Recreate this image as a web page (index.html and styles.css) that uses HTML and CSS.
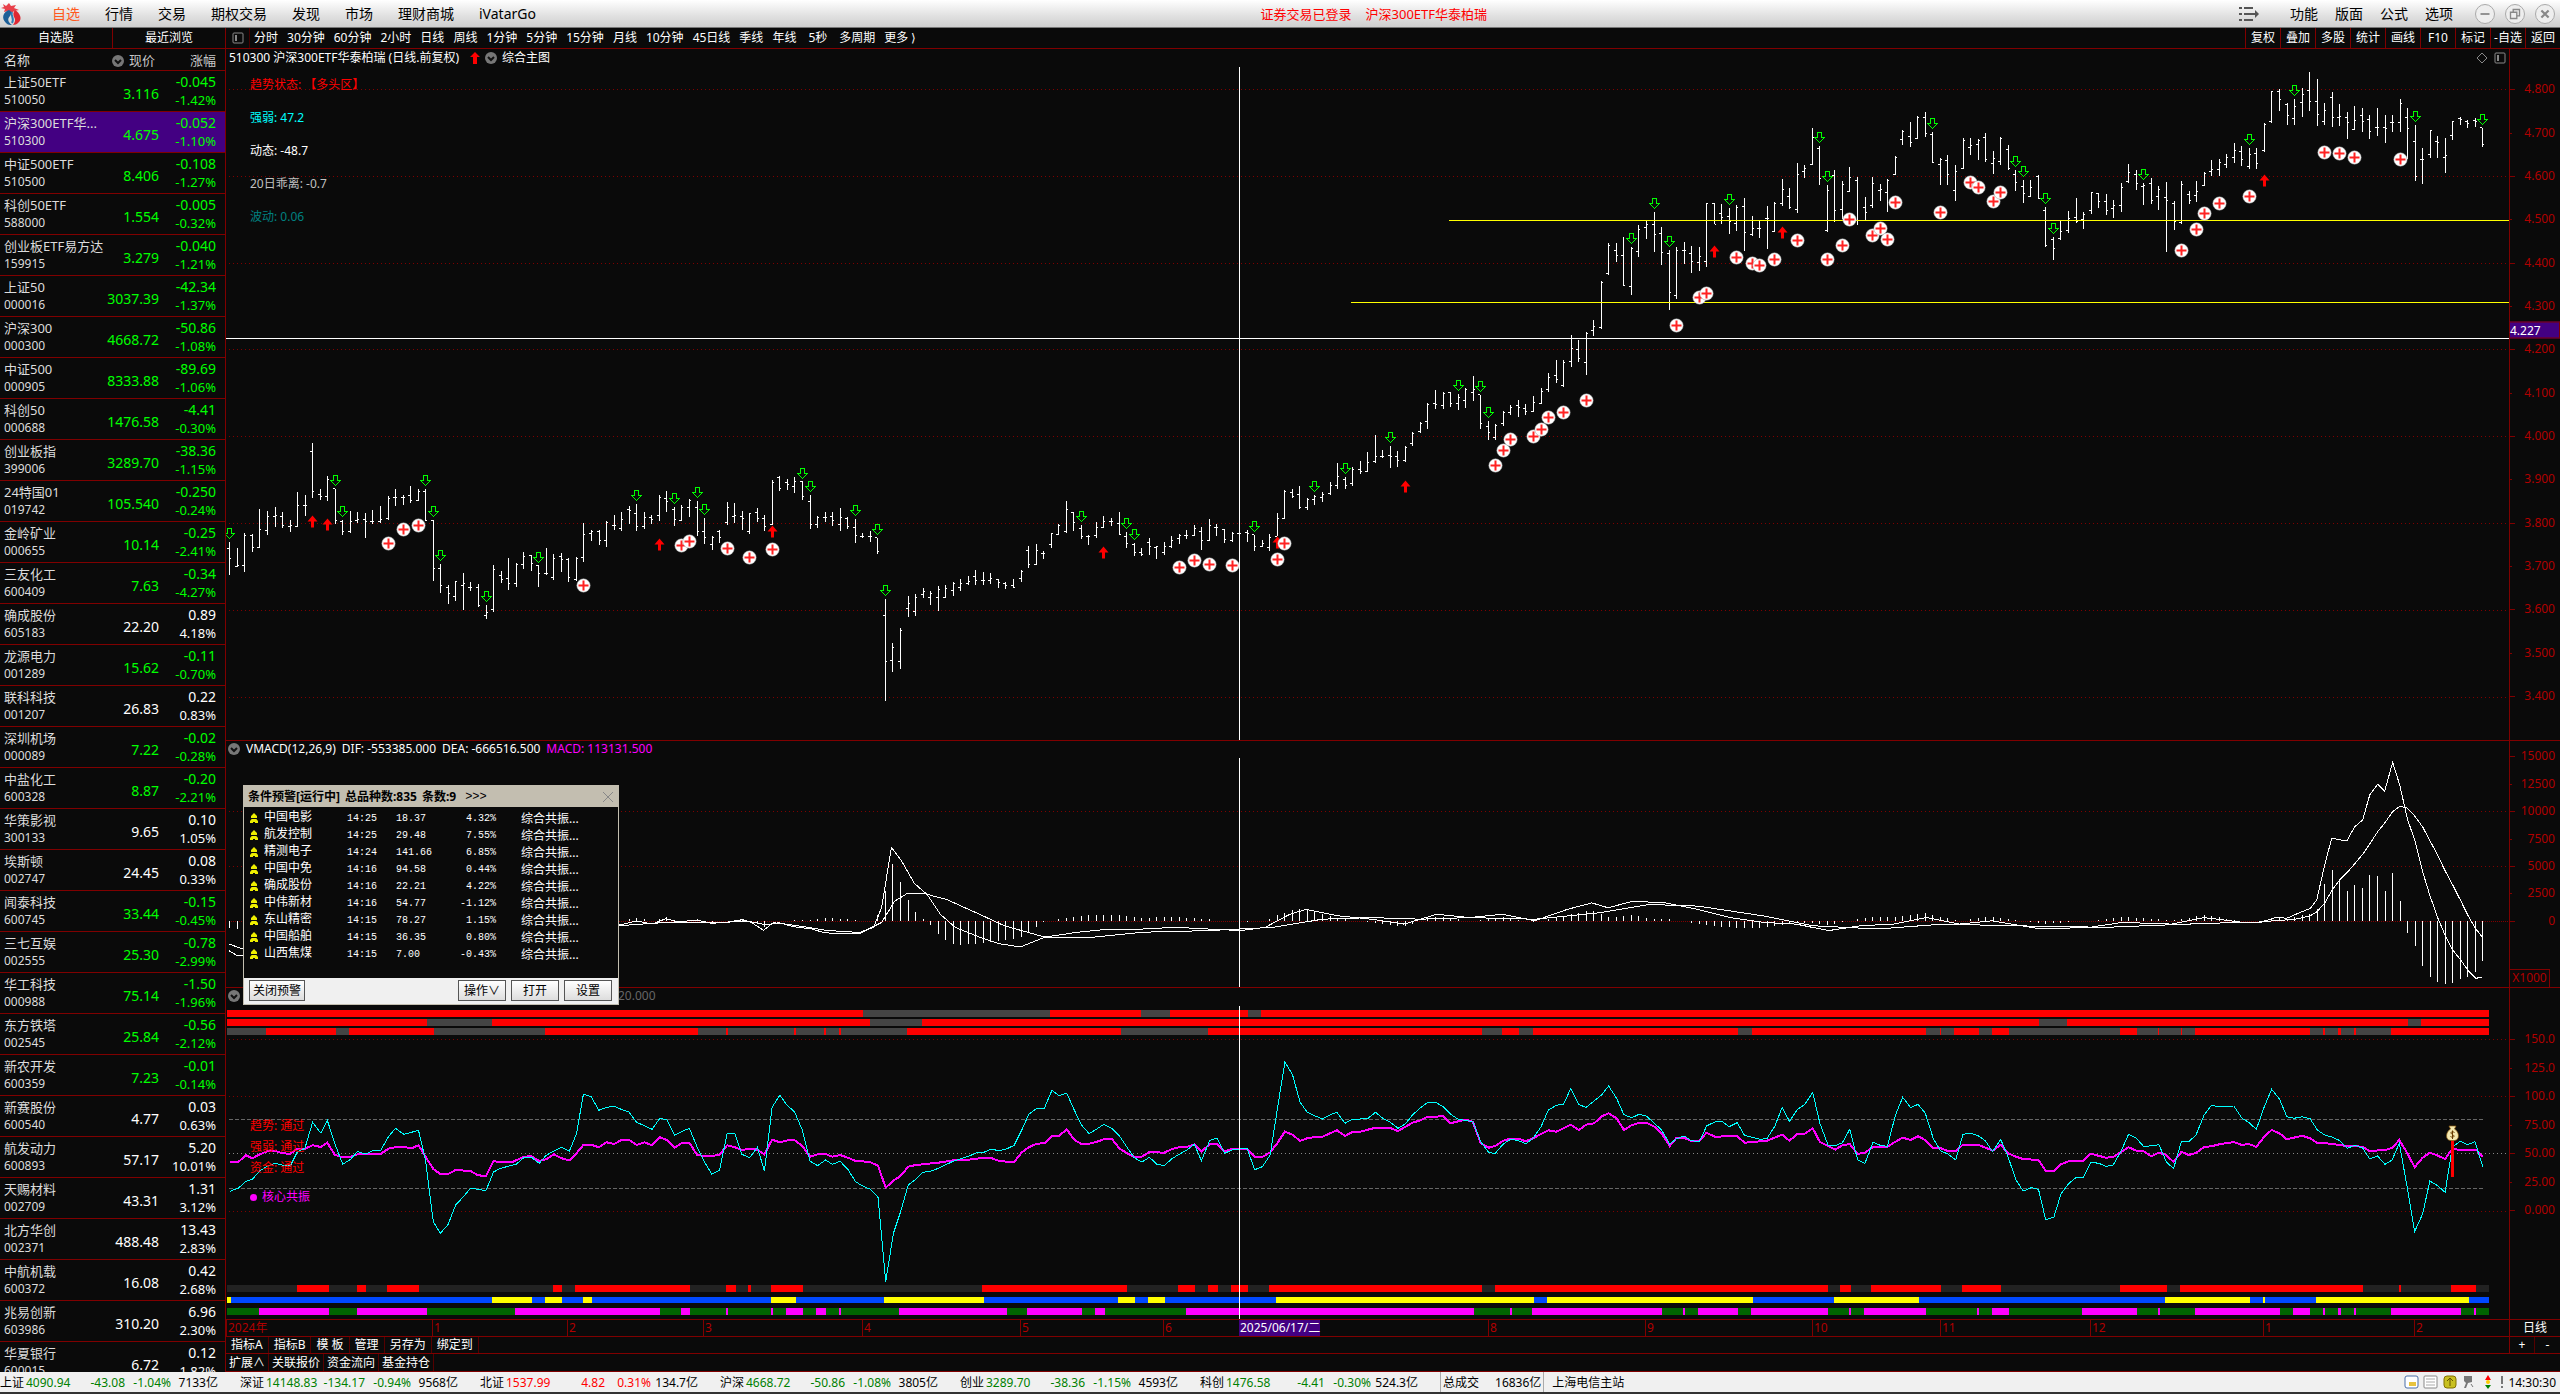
FILE: index.html
```html
<!DOCTYPE html>
<html lang="zh-CN">
<head>
<meta charset="utf-8">
<title>510300 沪深300ETF华泰柏瑞</title>
<link rel="stylesheet" href="styles.css">
</head>
<body>
<header class="topbar">
  <svg class="logo" viewBox="0 0 24 26"><path d="M3 3l3 2 3-3 2 3 5-1-2 3 5 2-5 1-2 2-4-2-4 1 1-3-4-1 3-1z" fill="#e8404a"/><path d="M9 9C3 11 1 17 6 22c2 2 4 2 6 2-4-3-5-6-2-9 2-3 1-5-1-6z" fill="#1c5f98"/><path d="M15 9c5 3 8 9 3 13-1 1-3 2-5 2 2-3 3-5 1-8-1-2-1-5 1-7z" fill="#e02832"/><path d="M12 11c-2 4 3 6 0 11" stroke="#2f7fb8" stroke-width="2" fill="none"/></svg>
  <nav class="menu"><a href="#" class="on">自选</a><a href="#">行情</a><a href="#">交易</a><a href="#">期权交易</a><a href="#">发现</a><a href="#">市场</a><a href="#">理财商城</a><a href="#">iVatarGo</a></nav>
  <div class="login"><span>证券交易已登录</span><span>沪深300ETF华泰柏瑞</span></div>
  <div class="tools">
    <svg class="listicon" viewBox="0 0 20 14"><path d="M0 1h3M5 1h9M0 7h3M5 7h11M0 13h3M5 13h9" stroke="#555" stroke-width="2"/><path d="M16 3l4 4-4 4z" fill="#555"/></svg>
    <nav class="menu2"><a href="#">功能</a><a href="#">版面</a><a href="#">公式</a><a href="#">选项</a></nav>
    <button class="win" aria-label="最小化"><svg viewBox="0 0 20 20"><path d="M5 10h10" stroke="#888" stroke-width="2"/></svg></button>
    <button class="win" aria-label="还原"><svg viewBox="0 0 20 20"><path d="M8 8V5h7v7h-3M5 8h7v7H5z" stroke="#888" stroke-width="1.5" fill="none"/></svg></button>
    <button class="win" aria-label="关闭"><svg viewBox="0 0 20 20"><path d="M6 6l8 8M14 6l-8 8" stroke="#888" stroke-width="2.4"/></svg></button>
  </div>
</header>
<main class="desk">
  <aside class="side">
    <div class="sidetabs"><button>自选股</button><button>最近浏览</button></div>
    <table class="quotes">
      <thead><tr><th class="n">名称</th><th class="p"><svg class="drop" viewBox="0 0 12 12"><circle cx="6" cy="6" r="6"/><path d="M3 5l3 3 3-3"/></svg> 现价</th><th class="c">涨幅</th></tr></thead>
      <tbody id="rows"></tbody>
    </table>
  </aside>
  <section class="work">
    <div class="toolbar">
      <span class="tgl"><svg class="pane" viewBox="0 0 12 12"><rect x="1" y="1" width="10" height="10" rx="1"/><path d="M3 3h2v6H3z"/></svg></span>
      <nav class="periods" id="periods"></nav>
      <nav class="acts" id="acts"></nav>
    </div>
    <div class="panel">
      <div class="plot">
        <svg class="canvas" id="main" viewBox="226 49 2283 692" preserveAspectRatio="none"></svg>
        <div class="title"><span>510300 沪深300ETF华泰柏瑞 (日线.前复权)</span><svg class="up" viewBox="0 0 10 12"><path d="M5 0l5 5H7v7H3V5H0z" fill="red"/></svg><svg class="drop" viewBox="0 0 12 12"><circle cx="6" cy="6" r="6"/><path d="M3 5l3 3 3-3"/></svg><span>综合主图</span></div>
        <div class="corner"><svg class="dia" viewBox="0 0 12 12"><path d="M6 1l5 5-5 5-5-5z"/></svg><svg class="pane" viewBox="0 0 12 12"><rect x="1" y="1" width="10" height="10" rx="1"/><path d="M3 3h2v6H3z"/></svg></div>
        <div class="notes"><span class="red">趋势状态: 【多头区】</span><span class="cyan">强弱: 47.2</span><span class="white">动态: -48.7</span><span class="silver">20日乖离: -0.7</span><span class="teal">波动: 0.06</span></div>
      </div>
      <div class="axis" id="axis1"></div>
    </div>
    <div class="panel">
      <div class="plot">
        <svg class="canvas" id="macd" viewBox="226 741 2283 247" preserveAspectRatio="none"></svg>
        <div class="title sub"><svg class="drop" viewBox="0 0 12 12"><circle cx="6" cy="6" r="6"/><path d="M3 5l3 3 3-3"/></svg><span>VMACD(12,26,9)</span><span>DIF: -553385.000</span><span>DEA: -666516.500</span><span class="mag">MACD: 113131.500</span></div>
      </div>
      <div class="axis" id="axis2"><span class="unit">X1000</span></div>
    </div>
    <div class="panel">
      <div class="plot">
        <svg class="canvas" id="sub" viewBox="226 988 2283 332" preserveAspectRatio="none"></svg>
        <div class="title sub"><svg class="drop" viewBox="0 0 12 12"><circle cx="6" cy="6" r="6"/><path d="M3 5l3 3 3-3"/></svg><span class="hiddenarg">20.000</span></div>
        <div class="flags"><span>趋势: 通过</span><span>强弱: 通过</span><span>资金: 通过</span><span class="mag core">核心共振</span></div>
      </div>
      <div class="axis" id="axis3"></div>
    </div>
    <div class="dates"><div class="months" id="months"></div><span class="daily">日线</span></div>
    <div class="tabs"><button>指标A</button><button>指标B</button><button>模 板</button><button>管理</button><button>另存为</button><button>绑定到</button><span class="zoom"><button>+</button><button>-</button></span></div>
    <div class="tabs last"><button>扩展∧</button><button>关联报价</button><button>资金流向</button><button>基金持仓</button></div>

    <section class="alert">
      <div class="alerthead"><b>条件预警[运行中]</b><b>总品种数:835</b><b>条数:9</b><span class="more">&gt;&gt;&gt;</span><button class="x" aria-label="关闭"><svg viewBox="0 0 12 12"><path d="M1 1l10 10M11 1L1 11" stroke="#888"/></svg></button></div>
      <div class="alertbody"><table id="alerts"></table></div>
      <div class="alertfoot"><button>关闭预警</button><span></span><button>操作∨</button><button>打开</button><button>设置</button></div>
    </section>
  </section>
</main>
<footer class="status">
  <div class="indices" id="indices"></div>
  <div class="total"><span>总成交</span><span>16836亿</span></div>
  <div class="host">上海电信主站</div>
  <div class="tray">
    <svg viewBox="0 0 16 16"><rect x="1" y="2" width="13" height="12" rx="2" fill="#fff" stroke="#4a6ea8"/><path d="M5 9h7M5 11h7" stroke="#e0b000" stroke-width="1.5"/></svg>
    <svg viewBox="0 0 16 16"><rect x="1" y="2" width="13" height="12" rx="1" fill="#fff" stroke="#888"/><path d="M3 5h9M3 8h9M3 11h9" stroke="#aaa"/></svg>
    <svg viewBox="0 0 16 16"><rect x="2" y="2" width="12" height="12" rx="3" fill="#c8c020" stroke="#807000"/><path d="M8 4v8M5 7l3-3 3 3" stroke="#665500" fill="none"/></svg>
    <svg viewBox="0 0 16 16"><path d="M3 2h8v6l-4 1-2 5H3l2-5-2-2z" fill="#777"/><path d="M10 10l2 3" stroke="#777"/></svg>
    <svg viewBox="0 0 16 16"><path d="M8 1l3 5H5z" fill="red"/><circle cx="8" cy="8" r="2" fill="#fc0"/><path d="M8 15l3-4H5z" fill="green"/></svg>
    <svg class="thin" viewBox="0 0 6 16"><path d="M3 2v8M3 12v2" stroke="#777" stroke-width="2"/></svg>
    <time>14:30:30</time>
  </div>
</footer>
<script src="app.js"></script>
</body>
</html>
```
FILE: styles.css
```css
* { box-sizing: border-box; }
body {
  margin: 0; height: 100vh; overflow: hidden;
  display: grid; grid-template-rows: 28px minmax(0, 1fr) 22px;
  background: #0a0a0a; color: #fff;
  font: 12px/16px "Noto Sans", "Noto Sans CJK SC", sans-serif;
}
a { color: inherit; text-decoration: none; }
button { font: inherit; color: inherit; background: none; border: 0; padding: 0; margin: 0; white-space: nowrap; }
svg { display: block; }
.red { color: #f00; } .cyan { color: #0ff; } .white { color: #fff; }
.silver { color: #c0c0c0; } .teal { color: #008080; } .mag { color: #f0f; }
.green { color: #0f0; }

.topbar {
  display: grid; grid-template-columns: 26px 1156fr auto 1000fr; align-items: center;
  background: linear-gradient(#fff, #e0e0e0 60%, #cfcfcf); border-bottom: 1px solid #777;
  color: #000; padding-right: 5px;
}
.logo { width: 24px; height: 26px; }
.menu { display: flex; gap: 25px; padding-left: 26px; font-size: 14px; line-height: 20px; white-space: nowrap; }
.menu .on { color: #ff5a1e; }
.login { display: flex; gap: 14px; color: #f00; font-size: 13px; white-space: nowrap; }
.tools { display: flex; justify-content: flex-end; align-items: center; gap: 10px; }
.listicon { width: 20px; height: 14px; margin-right: 21px; }
.menu2 { display: flex; gap: 17px; font-size: 14px; line-height: 20px; margin-right: 12px; }
.win { width: 20px; height: 20px; border-radius: 50%; border: 1px solid #aaa; background: #eee; }
.win svg { width: 18px; height: 18px; }

.desk { display: grid; grid-template-columns: 226px minmax(0, 1fr); min-height: 0; }
.side { border-right: 1px solid #800000; overflow: hidden; min-height: 0; }
.sidetabs { display: grid; grid-template-columns: 112px 1fr; height: 21px; border-bottom: 1px solid #800000; }
.sidetabs button + button { border-left: 1px solid #800000; }
.quotes { width: 100%; border-collapse: separate; border-spacing: 0; table-layout: fixed; }
.quotes th { height: 22px; padding: 0; font-size: 13px; font-weight: 400; line-height: 20px; color: #c8c8c8; border-bottom: 1px solid #800000; white-space: nowrap; }
.quotes td { height: 41px; padding: 0; border-bottom: 1px solid #800000; white-space: nowrap; font-size: 14px; line-height: 18px; vertical-align: middle; }
.quotes .n { width: 106px; padding-left: 4px; text-align: left; font-size: 13px; color: #dcdcdc; overflow: visible; }
.quotes .n span, .quotes .c span { display: block; }
.quotes .n .code { font-size: 12px; }
.quotes .p { width: 53px; text-align: right; }
.quotes th.p { padding-right: 4px; }
.quotes td.p { padding-top: 6px; }
.quotes .c { text-align: right; padding-right: 9px; }
.quotes .c .pct { font-size: 13px; }
.quotes .sel td { background: #430082; }
.drop { width: 12px; height: 12px; display: inline-block; vertical-align: -2px; fill: #777; flex: none; }
.drop path { fill: none; stroke: #111; stroke-width: 2; }
th .drop { margin-right: 2px; }
.pane { width: 12px; height: 12px; fill: none; stroke: #888; }
.pane path { fill: #888; stroke: none; }
.dia { width: 12px; height: 12px; fill: none; stroke: #888; }

.work {
  position: relative; display: grid; min-height: 0;
  grid-template-rows: 21px minmax(0, 692fr) minmax(0, 247fr) minmax(0, 332fr) 17px 17px 18px;
}
.toolbar { display: flex; border-bottom: 1px solid #800000; line-height: 20px; }
.tgl { width: 24px; display: grid; place-items: center; border-right: 1px solid #400; }
.periods { display: flex; gap: 9px; padding-left: 4px; flex: 1; white-space: nowrap; }
.periods .wide { padding: 0 3px; }
.acts { display: flex; }
.acts a { width: 35px; text-align: center; border-left: 1px solid #800000; white-space: nowrap; }
.panel { display: grid; grid-template-columns: minmax(0, 1fr) 51px; min-height: 0; }
.plot { position: relative; min-height: 0; }
.canvas { position: absolute; inset: 0; width: 100%; height: 100%; }
.title { position: absolute; left: 3px; top: 1px; display: flex; align-items: center; gap: 5px; white-space: nowrap; }
.title.sub { left: 2px; top: 0; gap: 6px; }
.title .up { width: 10px; height: 12px; margin-left: 6px; }
.corner { position: absolute; right: 3px; top: 3px; display: flex; gap: 6px; }
.notes { position: absolute; left: 24px; top: 28px; display: grid; gap: 17px; }
.flags { position: absolute; left: 24px; top: 130px; display: grid; gap: 5px; color: #f00; }
.flags .core { margin-top: 8px; display: flex; align-items: center; gap: 5px; }
.flags .core::before { content: ""; width: 7px; height: 7px; border-radius: 50%; background: #f0f; }
.hiddenarg { color: #666; margin-left: 372px; }
.axis { position: relative; border-left: 1px solid #800000; border-bottom: 1px solid #800000; color: #b00000; }
.axis span { position: absolute; right: 5px; transform: translateY(-50%); white-space: nowrap; }
.axis i { position: absolute; left: 0; height: 1px; background: #800000; }
.axis .cur { left: -1px; right: 0; height: 17px; line-height: 15px; background: #430082; color: #fff; border: 1px solid #800000; }
.axis .unit { right: 10px; bottom: 0; left: 0; height: 18px; border: 1px solid #800000; border-width: 1px 1px 0 0; transform: none; text-align: center; }
.dates { display: grid; grid-template-columns: minmax(0, 1fr) 51px; border-bottom: 1px solid #800000; }
.months { position: relative; color: #b00000; }
.months span { position: absolute; top: 0; height: 16px; line-height: 16px; padding-left: 1px; border-left: 1px solid #800000; white-space: nowrap; }
.months .now { background: #430082; color: #fff; border: 0; }
.daily { border-left: 1px solid #800000; text-align: center; line-height: 16px; }
.tabs { display: flex; border-bottom: 1px solid #800000; line-height: 16px; }
.tabs button { padding: 0 5px; border-right: 1px solid #500; }
.tabs.last button { padding: 0 3px; }
.tabs .zoom { margin-left: auto; width: 51px; display: grid; grid-template-columns: 1fr 1fr; border-left: 1px solid #800000; }
.tabs .zoom button:last-child { border: 0; }

.alert { position: absolute; left: 17px; top: 757px; width: 376px; border: 1px solid #c3beb0; background: #0a0a0a; color: #fff; }
.alerthead { display: flex; align-items: center; gap: 5px; height: 21px; padding: 0 4px; background: #c3beb0; color: #000; }
.alerthead .more { font: 12px "Liberation Mono", monospace; margin-left: 4px; }
.x { margin-left: auto; width: 12px; height: 12px; }
.alertbody { height: 171px; padding-top: 3px; }
.alertbody table { border-collapse: collapse; table-layout: fixed; width: 360px; }
.alertbody td { height: 17px; padding: 0; line-height: 15px; white-space: nowrap; font-family: "Liberation Mono", "Noto Sans CJK SC", monospace; font-size: 10px; }
.alertbody .nm { font-size: 12px; }
.alertbody .r { text-align: right; }
.alertbody .sig { padding-left: 25px; font-size: 12px; font-family: "Noto Sans", "Noto Sans CJK SC", sans-serif; }
.alertbody svg { width: 8px; height: 10px; margin: 0 0 2px 6px; }
.alertfoot { display: flex; gap: 5px; height: 26px; padding: 2px 6px 2px 5px; background: #f0f0f0; color: #000; }
.alertfoot span { flex: 1; }
.alertfoot button { width: 48px; height: 21px; border: 1px solid #555; background: linear-gradient(#fff, #ddd); }
.alertfoot button:first-child { width: 56px; }

.status { display: flex; background: #f0f0f0; color: #000; border-bottom: 2px solid #333; line-height: 21px; white-space: nowrap; overflow: hidden; }
.indices { display: flex; }
.idx { display: grid; grid-template-columns: 26px 45px 54px 46px 47px 22px; text-align: right; }
.idx span:first-child, .idx .v { text-align: left; }
.idx .dn { color: #008000; } .idx .rs { color: #f00; }
.total { display: flex; gap: 16px; padding: 0 2px; border-left: 1px solid #aaa; border-right: 1px solid #aaa; }
.host { padding-left: 8px; flex: 1; }
.tray { display: flex; gap: 3px; align-items: center; padding-right: 4px; }
.tray svg { width: 16px; height: 16px; }
.tray .thin { width: 6px; }
```
FILE: app.js
```js
const $ = id => document.getElementById(id);
const NS = 'http://www.w3.org/2000/svg';
function add(svg, tag, attrs) {
  const e = document.createElementNS(NS, tag);
  for (const k in attrs) e.setAttribute(k, attrs[k]);
  svg.appendChild(e);
  return e;
}
const nums = s => s.trim().split(/[\s,]+/).map(Number);

// ---- watch list ----
const quotes = `上证50ETF 510050 3.116 -0.045 -1.42%
沪深300ETF华... 510300 4.675 -0.052 -1.10%
中证500ETF 510500 8.406 -0.108 -1.27%
科创50ETF 588000 1.554 -0.005 -0.32%
创业板ETF易方达 159915 3.279 -0.040 -1.21%
上证50 000016 3037.39 -42.34 -1.37%
沪深300 000300 4668.72 -50.86 -1.08%
中证500 000905 8333.88 -89.69 -1.06%
科创50 000688 1476.58 -4.41 -0.30%
创业板指 399006 3289.70 -38.36 -1.15%
24特国01 019742 105.540 -0.250 -0.24%
金岭矿业 000655 10.14 -0.25 -2.41%
三友化工 600409 7.63 -0.34 -4.27%
确成股份 605183 22.20 0.89 4.18%
龙源电力 001289 15.62 -0.11 -0.70%
联科科技 001207 26.83 0.22 0.83%
深圳机场 000089 7.22 -0.02 -0.28%
中盐化工 600328 8.87 -0.20 -2.21%
华策影视 300133 9.65 0.10 1.05%
埃斯顿 002747 24.45 0.08 0.33%
闻泰科技 600745 33.44 -0.15 -0.45%
三七互娱 002555 25.30 -0.78 -2.99%
华工科技 000988 75.14 -1.50 -1.96%
东方铁塔 002545 25.84 -0.56 -2.12%
新农开发 600359 7.23 -0.01 -0.14%
新赛股份 600540 4.77 0.03 0.63%
航发动力 600893 57.17 5.20 10.01%
天赐材料 002709 43.31 1.31 3.12%
北方华创 002371 488.48 13.43 2.83%
中航机载 600372 16.08 0.42 2.68%
兆易创新 603986 310.20 6.96 2.30%
华夏银行 600015 6.72 0.12 1.82%`;
$('rows').innerHTML = quotes.split('\n').map(l => {
  const [n, code, p, c, pct] = l.split(' ');
  const k = c[0] === '-' ? 'green' : 'white';
  return `<tr class="${code === '510300' ? 'sel' : ''}"><td class="n"><span>${n}</span><span class="code">${code}</span></td><td class="p ${k}">${p}</td><td class="c ${k}"><span>${c}</span><span class="pct">${pct}</span></td></tr>`;
}).join('');

$('periods').innerHTML = '分时 30分钟 60分钟 2小时 日线 周线 1分钟 5分钟 15分钟 月线 10分钟 45日线 季线 年线 5秒 多周期 更多&nbsp;&#10217;'
  .split(' ').map(t => `<a href="#"${t === '5秒' ? ' class="wide"' : ''}>${t}</a>`).join('');
$('acts').innerHTML = '复权 叠加 多股 统计 画线 F10 标记 -自选 返回'.split(' ').map(t => `<a href="#">${t}</a>`).join('');

// ---- alert window ----
$('alerts').innerHTML = '<colgroup><col style="width:20px"><col style="width:83px"><col style="width:49px"><col style="width:40px"><col style="width:60px"><col></colgroup>' +
`中国电影 14:25 18.37 4.32%
航发控制 14:25 29.48 7.55%
精测电子 14:24 141.66 6.85%
中国中免 14:16 94.58 0.44%
确成股份 14:16 22.21 4.22%
中伟新材 14:16 54.77 -1.12%
东山精密 14:15 78.27 1.15%
中国船舶 14:15 36.35 0.80%
山西焦煤 14:15 7.00 -0.43%`.split('\n').map(l => {
  const [n, t, p, c] = l.split(' ');
  return `<tr><td><svg viewBox="0 0 8 10"><path d="M4 0l3 3v2H5.500l2.500 3v2H0V8l2.500-3H1V3z" fill="#ee0"/><path d="M1 5.500h6M3 9.500h2" stroke="#0a0a0a"/></svg></td><td class="nm">${n}</td><td>${t}</td><td>${p}</td><td class="r">${c}</td><td class="sig">综合共振...</td></tr>`;
}).join('');

// ---- status bar ----
$('indices').innerHTML = `上证 4090.94 -43.08 -1.04% 7133亿
深证 14148.83 -134.17 -0.94% 9568亿
北证 1537.99 4.82 0.31% 134.7亿
沪深 4668.72 -50.86 -1.08% 3805亿
创业 3289.70 -38.36 -1.15% 4593亿
科创 1476.58 -4.41 -0.30% 524.3亿`.split('\n').map(l => {
  const [n, v, c, p, a] = l.split(' ');
  const k = c[0] === '-' ? 'dn' : 'rs';
  return `<div class="idx"><span>${n}</span><span class="v ${k}">${v}</span><span class="${k}">${c}</span><span class="${k}">${p}</span><span>${a}</span><span></span></div>`;
}).join('');

// ---- axes ----
function axis(id, top, height, list) {
  let h = '';
  list.forEach(([t, y], i) => {
    const p = ((y - top) / height * 100).toFixed(3);
    h += `<span style="top:${p}%">${t}</span><i style="top:${p}%;width:${i % 2 ? 2 : 5}px"></i>`;
  });
  $(id).insertAdjacentHTML('beforeend', h);
}
axis('axis1', 49, 692, Array.from({ length: 15 }, (_, i) => [(4.8 - i / 10).toFixed(3), 89.5 + i * 43.4]));
$('axis1').insertAdjacentHTML('beforeend', `<span class="cur" style="top:${(330.5 - 49) / 6.92}%">4.227</span>`);
axis('axis2', 741, 247, [15000, 12500, 10000, 7500, 5000, 2500, 0].map((v, i) => [v, 756.5 + i * 27.5]));
axis('axis3', 988, 332, ['150.0', '125.0', '100.0', '75.00', '50.00', '25.00', '0.000'].map((v, i) => [v, 1039.5 + i * 28.6]));
$('months').innerHTML = [['2024年', 226], [1, 432], [2, 567], [3, 703], [4, 862], [5, 1020], [6, 1163], [8, 1488], [9, 1645], [10, 1812], [11, 1940], [12, 2090], [1, 2263], [2, 2414]]
  .map(([t, x]) => `<span style="left:${((x - 226) / 22.83).toFixed(3)}%">${t}</span>`).join('') +
  `<span class="now" style="left:${(1239 - 226) / 22.83}%">2025/06/17/二</span>`;

function hline(svg, y, x1, x2, color, dash) {
  add(svg, 'path', { d: `M${x1} ${y}H${x2}`, stroke: color, 'stroke-dasharray': dash || 'none', 'shape-rendering': 'crispEdges' });
}
function vline(svg, y1, y2) {
  add(svg, 'path', { d: `M1239.5 ${y1}V${y2}`, stroke: '#fff', 'shape-rendering': 'crispEdges' });
}

// ---- price bars: high, low, open, close offsets in thirds of a unit below each base ----
const X = i => Math.round(229.3 + 7.5357 * i);
const series = [
[420, `366 465 385 415 385 441 438 436 339 456 436 345 342 396 345 382 267 384 380 326 273 345 330 287 261 321 287 285 276 324 288 315 300 336 318 316 216 321 317 254
225 288 256 256 69 234 94 213 207 240 223 228 168 243 228 178 207 312 205 300 300 345 303 332 273 339 332 302 276 308 300 296 280 354 296 303 270 312 303 303
258 309 303 298 228 300 295 235 207 258 232 232 225 255 232 230 198 249 226 240 207 243 240 214 207 303 214 300 300 483 300 444 432 519 444 496 495 552 502 518
483 543 529 484 459 571 496 490 486 513 502 502 492 561 502 556 555 597 586 577 435 576 568 447 453 488 464 476 414 510 475 490 429 501 490 431 396 447 433 408
405 453 406 430 435 501 435 460 384 465 460 460 402 480 471 415 399 456 408 418 414 486 418 472 411 483 478 415 309 426 411 341 330 363 340 332 330 375 333 360
303 381 361 306 285 330 314 314 276 333 325 297 258 312 268 270 252 333 280 318 276 327 318 290 285 312 290 297 225 303 284 230 213 276 235 244 261 318 268 296
255 303 300 262 237 291 261 240 243 348 262 333 294 372 333 352 348 390 372 352 330 369 333 350 246 315 306 262 249 309 288 285 273 330 289 294 279 342 334 280
264 306 276 294 285 333 294 318 180 315 312 186 168 213 172 205 177 210 185 193 171 219 199 183 183 240 184 228 225 327 243 312 288 324 312 291 276 306 290 290
276 318 289 300 264 333 313 292 291 327 293 318 297 369 322 345 339 354 349 349 333 366 349 349 354 402 351 394 537 843 586 723 669 756 721 680 624 747 723 631
528 591 565 550 522 588 573 532 504 534 523 512 513 556 532 520 498 573 532 508 495 534 532 505 486 528 511 490 477 513 502 490 468 495 490 484 450 495 468 481
456 495 481 481 459 492 481 474 477 504 478 487 486 507 490 495 477 503 496 501 450 486 475 454 378 444 390 433 372 435 433 390 393 417 398 398 339 384 373 340
312 345 341 314 243 339 334 268 276 333 277 306 315 357 324 348 345 375 348 348 306 354 346 322 288 324 322 303 294 318 303 303 276 345 310 343 336 384 349 370
369 408 373 396 384 408 395 403 354 405 367 378 378 417 380 379 366 405 397 378 348 384 379 360 342 372 354 345 330 357 346 345 315 348 345 325 321 390 333 361
297 363 361 316 312 348 322 320 327 369 327 357 336 366 360 338 338 362 338 338`],
[180, `1050 1086 1057 1060 1065 1113 1062 1097 1080 1102 1099 1090 1062 1113 1102 1072 999 1068 1067 1015 930 1017 1013 932 927 954 936 948 918 987 943 980 954 990 982 956 945 975 958 947
936 966 952 942 906 945 940 915 849 927 916 889 891 927 898 914 861 918 910 868 843 882 868 874 816 876 874 847 765 849 844 829 810 834 829 829 798 864 826 829
813 861 829 841 798 846 841 800 756 798 790 760 726 759 754 728 669 747 724 671 630 687 668 672 636 687 676 638 637 681 637 668 642 690 668 652 624 684 661 626
588 663 637 628 645 747 643 730 723 780 739 757 732 780 772 734 693 738 730 696 675 705 697 680 660 711 676 681 672 705 684 694 648 696 694 667 624 672 670 634
579 636 628 590 540 609 586 598 540 621 616 547 465 561 544 505 480 546 508 535 456 585 547 458 420 468 451 439 303 447 442 307 189 285 280 195 189 246 211 226
171 318 226 314 201 345 319 204 135 231 214 148 123 177 142 132 96 216 133 163 141 255 160 217 210 390 220 337 201 357 346 210 186 252 211 209 198 279 220 244
201 273 247 229 69 261 244 70 69 132 70 131 72 132 100 112 84 162 109 124 75 153 130 81 54 213 79 157 108 168 163 145 123 174 145 145`],
[60, `438 567 475 475 426 516 514 428 357 438 428 386 384 447 409 442 309 459 448 343 315 354 334 325 204 315 311 230 258 375 265 355 375 516 511 391 330 486 345 451
363 477 448 373 321 396 394 352 351 495 361 481 411 480 442 457 351 444 436 370 372 423 391 388 357 456 397 361 289 345 343 290 210 255 238 214 186 261 229 247
168 237 235 170 156 231 172 220 216 309 223 307 294 375 313 298 285 375 300 343 315 423 391 334 234 327 325 241 234 285 262 256 237 300 253 241 219 306 232 298
273 342 310 295 231 315 304 233 255 330 268 325 330 393 341 367 360 429 379 400 360 411 409 382 345 417 348 413 441 561 451 556 531 600 538 565 480 540 535 514
453 519 511 475 414 489 472 484 456 507 478 463 396 462 451 397 399 444 398 424 402 465 424 451 420 474 444 436 369 456 436 382 312 369 364 337 330 390 343 370
369 435 379 376 354 432 370 421 378 450 409 388 366 576 412 421 423 510 430 484 363 492 486 373 393 432 401 421 363 426 406 394 336 378 376 340 300 348 334 328
297 348 328 305
282 324 313 292 249 309 292 270 258 318 274 298 264 327 319 283 264 327 280 310 189 276 271 193 93 189 184 94 87 153 94 118 129 195 133 166 117 195 175 139
84 171 127 103 36 153 91 124 57 198 124 163 129 195 184 151 96 201 112 172 132 198 172 169 156 237 172 187 138 210 208 181 144 216 166 184 165 237 178 214
144 228 202 202 165 249 202 205 165 216 187 187 117 216 187 130 144 297 172 205 195 363 244 349 264 372 298 298 210 294 283 211 228 294 244 247 234 339 292 286
183 240 226 184 171 195 175 176 180 204 184 190 174 201 181 184 204 261 202 253`]];
const main = $('main');
for (let i = 0; i < 8; i++) hline(main, 89.5 + Math.round(i * 86.8), 229, 2509, '#800000', '1 3');
let d = '', n = 0;
series.forEach(([base, s]) => {
  const a = nums(s);
  for (let k = 0; k + 3 < a.length; k += 4, n++) {
    const [h, l, o, c] = a.slice(k, k + 4).map(v => Math.round(base + v / 3));
    const x = X(n);
    d += `M${x + .5} ${h}V${l}M${x - 2} ${o + .5}h2M${x + 1} ${c + .5}h1`;
  }
});
add(main, 'path', { d, stroke: '#fff', fill: 'none', 'shape-rendering': 'crispEdges' });
hline(main, 220.5, 1449, 2509, '#ff0');
hline(main, 302.5, 1351, 2509, '#ff0');

const marks = {
  dn: [[420, '0 340 14 181 15 274 26 181 27 274 28 406 34 529 41 412 54 226 59 235 62 217 63 268 76 160 77 199 83 271 86 328 87 511 113 289 119 310 120 343 136 319'],
    [180, '144 919 148 865 154 772 163 616 166 619 167 697 186 175 189 70 191 184 199 58'],
    [60, '211 232 212 349 226 190 237 304 238 334 241 415 242 505 254 343 268 238 274 91 290 169 299 178']],
  up: [[420, '11 302 13 312 57 371 72 334 116 395'], [180, '139 1087 156 917 197 212'], [60, '206 515 270 359']],
  plus: [[420, '21 369 23 327 25 315 47 495 60 375 61 363 66 384 69 411 72 387 126 441 128 420 130 432 133 435'],
    [180, '140 1089 139 1138 168 855 169 810 170 777 173 768 174 747 175 711 177 696 180 660 192 435 195 351 196 339 200 231 202 249 203 255'],
    [60, '205 597 208 540 212 597 214 555 215 477 218 525 219 504 220 537 221 426 227 456 231 366 232 381 234 423 235 396 259 570 261 507 262 459 264 429 268 408 278 276 280 279 282 291 288 297']]
};
for (const kind in marks) marks[kind].forEach(([base, s]) => {
  const a = nums(s);
  for (let k = 0; k < a.length; k += 2) {
    const x = X(a[k]) + .5, y = Math.round(base + a[k + 1] / 3) + .5;
    if (kind === 'dn') add(main, 'path', { d: `M${x - 2} ${y - 5}h4v5h3L${x} ${y + 5}l-5-5h3z`, stroke: '#0f0', fill: 'none', 'shape-rendering': 'crispEdges' });
    if (kind === 'up') add(main, 'path', { d: `M${x} ${y - 6}l5 6h-3.500v6h-3v-6h-3.500z`, fill: 'red' });
    if (kind === 'plus') {
      add(main, 'circle', { cx: x, cy: y, r: 6.7, fill: '#fff', stroke: '#999', 'stroke-width': .5 });
      add(main, 'path', { d: `M${x - 5} ${y}h10M${x} ${y - 5}v10`, stroke: '#f22', 'stroke-width': 2 });
    }
  }
});
hline(main, 338.5, 226, 2509, '#fff');
vline(main, 67, 740);
hline(main, 740.5, 226, 2509, '#800000');

// ---- volume MACD ----
const macd = $('macd');
[811.5, 866.5].forEach(y => hline(macd, y, 229, 2509, '#800000', '1 3'));
hline(macd, 921.5, 229, 2509, '#800000', '1 1');
const map = (s, ox, kx, oy, ky) => {
  const a = nums(s), r = [];
  for (let k = 0; k < a.length; k += 2) r.push((ox + a[k] / kx).toFixed(1) + ',' + (oy + a[k + 1] / ky).toFixed(1));
  return r;
};
const line = (svg, pts, color, w) => add(svg, 'polyline', { points: pts.join(' '), fill: 'none', stroke: color, 'stroke-width': w, 'shape-rendering': 'crispEdges' });
const dif = [
  ...map('22 632 40 645 56 647 500 620 978 555 1000 549 1020 543 1060 552 1092 536 1120 545 1170 541 1205 550 1240 547 1280 539 1300 546 1332 571 1355 548 1390 553 1430 560 1480 570 1530 575 1568 577', 220, 2.45, 740, 3),
  ...map('535 568 540 556 546 519 552 527 560 541 568 548 576 560 585 568 600 574 612 578 625 580 640 574 660 571 680 569 700 569 720 568 740 569 760 570 775 568 790 560 800 557 820 561 840 563 860 566 880 560 900 562 920 560 940 564 960 557 975 553 985 556 1000 552 1020 553 1040 557 1060 562 1080 565 1100 566 1120 570 1140 567 1160 566 1180 562 1200 566 1220 564 1250 569 1280 568 1300 565 1330 566 1350 562', 0, .6125, 0, .6125),
  ...map('0 546 40 549 70 544 110 532 140 535 185 515 210 506 230 480 254 375 275 295 320 303 344 260 368 240 389 165 413 133 434 153 458 67 479 135 503 240 524 300 548 395 569 465 593 533 614 583 638 630 662 660 683 690 707 715 726 712', 2240, 3, 740, 3)];
const dea = [
  ...map('22 612 40 620 56 627 500 610 978 557 1060 550 1120 546 1200 547 1300 545 1340 555 1370 548 1405 560 1450 567 1480 578 1530 582 1568 580', 220, 2.45, 740, 3),
  ...map('540 565 548 552 556 547 565 547 580 551 600 560 615 567 640 574 670 574 700 571 740 570 780 568 810 563 840 562 870 563 900 562 940 563 980 559 1010 554 1040 555 1080 561 1110 567 1150 569 1190 566 1230 567 1290 568 1340 566', 0, .6125, 0, .6125),
  ...map('0 547 60 547 110 541 160 539 209 528 230 516 254 489 275 452 299 420 323 396 344 371 368 343 389 312 413 275 434 249 458 215 479 199 500 204 524 228 548 261 569 301 593 345 614 390 638 435 662 482 683 525 707 566 726 590', 2240, 3, 740, 3)];
line(macd, dif, '#fff', 1);
line(macd, dea, '#fff', 1);
const bigBars = nums('507 432 390 420 453 435 444 405 408 453 399 484 579 618 678 711 726 732 729 717 711 696 663');
const at = (pts, x) => {
  for (let k = 1; k < pts.length; k++) {
    const [x0, y0] = pts[k - 1].split(',').map(Number), [x1, y1] = pts[k].split(',').map(Number);
    if (x >= x0 && x <= x1) return y0 + (y1 - y0) * (x - x0) / (x1 - x0 || 1);
  }
  return 0;
};
let bars = '';
for (let i = 0; i < 300; i++) {
  const x = X(i);
  let y = 921 + (at(dif, x) - at(dea, x));
  if (i >= 277) y = 740 + bigBars[i - 277] / 3;
  if (Math.abs(y - 921) >= 1 && Math.abs(y - 921) < 100) bars += `M${x + .5} 921V${Math.round(y)}`;
}
add(macd, 'path', { d: bars, stroke: '#fff', 'shape-rendering': 'crispEdges' });
vline(macd, 758, 987);
hline(macd, 987.5, 226, 2509, '#800000');

// ---- resonance panel ----
const sub = $('sub');
[1039.5, 1096.5, 1211.5].forEach(y => hline(sub, y, 229, 2509, '#800000', '1 3'));
hline(sub, 1153.5, 229, 2509, '#888', '1 3');
[1119.5, 1188.5].forEach(y => hline(sub, y, 229, 2484, '#666', '4 2'));
function strip(y, h, base, color, s) {
  add(sub, 'rect', { x: 227, y, width: 2262, height: h, fill: base });
  const a = nums(s);
  for (let k = 0; k < a.length; k += 2) add(sub, 'rect', { x: a[k], y, width: a[k + 1] - a[k], height: h, fill: color });
}
strip(1010, 7, '#f00', '#444', '863 1050 1141 1170 1248 1261');
strip(1019, 7, '#f00', '#444', '427 492 870 922 2039 2067 2408 2421');
strip(1028, 7, '#f00', '#444', '227 266 336 349 434 545 698 726 728 794 796 824 826 839 841 907 1121 1208 1482 1502 1519 1533 1738 1752 1926 1940 1941 1954 1979 1992 2009 2120 2137 2158 2159 2181 2182 2195 2310 2323 2325 2338 2341 2354 2356 2391');
strip(1285, 7, '#222', '#f00', '297 329 357 366 387 419 553 562 575 690 726 736 748 751 771 803 982 1127 1178 1195 1208 1218 1231 1248 1269 1482 1495 1828 1840 1851 1871 1941 1962 2001 2120 2167 2180 2363 2399 2401 2451 2476');
strip(1297, 6, '#0048ff', '#ff0', '227 231 492 532 545 562 583 592 771 796 884 984 1118 1135 1148 1165 1276 1534 1547 1753 1834 1919 2165 2250 2263 2265 2316 2469');
strip(1308, 7, '#006400', '#f0f', '259 329 357 427 515 660 681 690 726 728 771 773 786 803 816 826 839 841 899 1007 1027 1082 1095 1105 1186 1474 1510 1512 1532 1662 1683 1685 1698 1738 1751 1828 1849 1851 1864 1926 1977 1979 1992 2009 2082 2137 2158 2160 2195 2280 2293 2310 2323 2325 2338 2341 2354 2356 2391 2461 2474 2476');
line(sub, [
  ...map('14 486 26 486 37 466 46 475 57 463 68 453 78 452 88 459 100 462 110 446 121 446 132 436 144 441 153 428 164 465 175 472 186 470 196 463 229 462 240 446 250 442 262 441 273 445 283 436 293 470 304 507 314 522 325 522 336 510 357 513 368 526 379 528 390 483 400 487 418 485 433 470 444 469 455 483 465 478 476 463 487 475 498 481 508 460 518 435 529 434 540 442 551 427 562 432 572 420 583 419 594 435 605 427 616 436 627 412 637 420 648 443 659 428 669 428 680 464 690 468 701 468 712 464 723 436 734 442 744 450 755 446 766 449 776 463 787 419 798 427 809 421 819 420 830 438 841 470 852 463 863 462 873 470 884 465 895 473 906 483 916 484 927 487 938 497 949 563 960 542 970 528 981 500 992 495 1024 488 1045 481 1067 479 1089 473 1099 474 1110 482 1121 485 1132 486 1143 457 1153 442 1164 431 1175 430 1186 408 1196 408 1207 388 1218 420 1228 432 1239 431 1250 425 1260 418 1271 416 1282 445 1293 460 1303 470 1314 470 1325 456 1346 458 1357 447 1368 441 1378 441 1389 433 1399 455 1411 432 1421 431 1432 454 1443 446 1464 448 1475 471 1486 471 1497 457 1507 430 1518 395 1529 404', 220, 1.4255, 1000, 3),
  ...map('0 423 9 415 19 411 28 410 46 391 56 408 65 396 75 395 94 383 112 384 122 393 140 368 150 361 159 350 169 350 178 348 187 370 197 364 206 359 215 365 225 430 235 443 243 438 253 422 262 416 272 416 281 424 290 415 300 402 309 391 319 395 337 374 347 390 356 374 366 370 376 348 384 340 394 355 403 390 413 375 422 369 431 368 441 380 450 400 460 438 468 415 478 414 487 423 497 423 506 398 516 410 544 408 553 428 581 422 600 404 609 422 619 402 628 401 638 385 647 426 666 449 675 436 684 432 694 462 703 458 713 441 731 440 741 425 750 413 760 420 769 409 778 420 788 444 797 444 806 453 816 454 825 434 844 434 862 452 872 434 881 460 891 470 900 477 919 480 928 513 938 513 947 493 957 483 975 482 984 461 1003 473 1012 471 1031 442 1041 452 1050 454 1059 469 1069 458 1078 465 1087 486 1097 455 1106 465 1115 459 1125 441 1134 439 1144 433 1162 426 1172 435 1181 432 1190 441 1200 410 1209 390 1219 400 1228 418 1247 407 1257 415 1266 429 1285 431 1294 436 1322 440 1331 453 1350 450 1359 444 1368 420 1378 460 1387 502 1397 473 1406 458 1415 466 1425 477 1434 446 1444 450 1464 450 1472 471', 1300, 1.2444, 1000, 3)
], '#f0f', 2);
line(sub, [
  ...map('14 574 26 565 37 544 46 538 57 512 68 498 78 490 88 495 100 498 110 456 121 445 132 367 144 400 153 361 164 432 175 493 186 478 196 455 208 462 218 452 229 452 240 410 250 385 262 403 273 397 283 391 293 480 304 665 314 700 325 674 336 615 347 590 357 565 368 568 379 572 390 516 400 505 422 493 433 473 444 472 455 490 465 466 476 453 487 442 498 453 508 402 518 283 529 290 540 331 551 322 562 319 572 328 583 336 594 367 605 377 616 388 627 355 637 359 648 406 659 394 669 385 680 440 690 483 701 523 712 510 723 400 734 401 744 463 755 473 766 442 776 513 787 322 798 286 809 317 819 335 830 390 841 483 852 497 863 480 873 493 884 484 895 508 906 545 916 558 927 568 938 592 949 845 960 700 970 636 981 555 992 538 1002 517 1013 514 1024 505 1045 484 1067 469 1078 459 1089 457 1099 447 1110 452 1121 447 1132 436 1143 390 1153 343 1164 325 1175 325 1186 271 1196 287 1207 279 1218 331 1228 375 1239 401 1250 387 1260 373 1271 385 1282 407 1293 442 1303 473 1314 486 1325 472 1335 492 1346 497 1357 476 1368 462 1378 450 1389 433 1399 482 1411 421 1421 414 1432 460 1443 450 1454 447 1464 445 1475 509 1486 500 1497 465 1507 330 1518 186 1529 225', 220, 1.4255, 1000, 3),
  ...map('0 306 9 337 19 348 28 357 37 345 46 337 56 370 65 358 84 356 94 337 103 355 112 366 122 385 131 372 140 345 150 323 159 307 169 307 178 320 187 342 197 358 206 361 215 365 225 425 235 458 243 460 253 432 262 418 272 422 281 431 290 415 300 380 309 330 319 316 328 313 337 265 347 314 356 322 366 303 376 283 384 258 394 295 403 344 413 353 422 343 431 348 441 370 450 390 460 432 468 417 478 408 487 422 497 425 506 378 516 366 525 364 534 380 544 368 553 406 563 412 572 418 581 416 591 378 600 322 609 364 619 328 628 314 638 277 647 370 657 435 666 437 675 428 684 388 694 480 703 490 713 427 722 436 731 439 741 345 750 292 760 323 769 313 778 339 788 415 797 452 806 462 816 480 825 403 835 400 844 407 853 423 862 455 872 418 881 470 891 540 900 573 910 563 919 568 928 659 938 652 947 582 957 550 966 532 975 532 984 487 994 490 1003 499 1012 495 1022 452 1031 403 1041 415 1050 440 1059 437 1069 434 1078 485 1087 506 1097 424 1106 425 1115 405 1125 345 1134 316 1144 320 1162 318 1172 354 1181 368 1190 388 1200 320 1209 268 1219 298 1228 350 1237 355 1247 350 1257 356 1266 390 1275 405 1285 412 1294 422 1303 445 1313 436 1322 443 1331 476 1341 468 1350 493 1359 480 1368 430 1378 565 1387 695 1397 642 1406 543 1415 556 1425 577 1434 440 1444 424 1453 434 1462 425 1472 501', 1300, 1.2444, 1000, 3)
], '#0ff', 1);
add(sub, 'path', { d: 'M2452.500 1140V1177', stroke: '#f00', 'stroke-width': 3 });
add(sub, 'path', { d: 'M2449 1126h7l-1.500 3c5 3 5.500 11 0 11.500h-4c-5.500-.5-5-8.500 0-11.500z', fill: '#f5e9b0', stroke: '#8a5a10', 'stroke-width': .7 });
add(sub, 'path', { d: 'M2454.500 1132.500c-3-2-5 .5-2 2s1 4-2 2M2452.500 1130.500v8.500', stroke: '#6a3c00', fill: 'none' });
vline(sub, 1006, 1320);
hline(sub, 1319.5, 226, 2509, '#800000');
```
